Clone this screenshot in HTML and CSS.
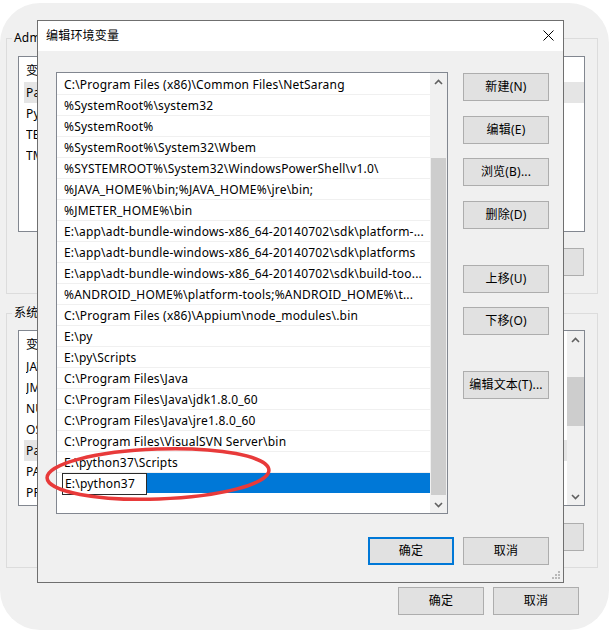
FILE: index.html
```html
<!DOCTYPE html>
<html lang="zh-CN">
<head>
<meta charset="utf-8">
<title>编辑环境变量</title>
<link rel="stylesheet" href="styles.css">
</head>
<body>
<div class="bgwin">
  <div class="group">
    <div class="glabel">Administrator 的用户变量(U)</div>
    <div class="blist">
      <div class="bhead"><span class="cell">变量</span></div>
      <div class="brow hl"><span class="cell">Path</span></div>
      <div class="brow"><span class="cell">PyCharm</span></div>
      <div class="brow"><span class="cell">TEMP</span></div>
      <div class="brow"><span class="cell">TMP</span></div>
    </div>
    <div class="bbtnrow">
      <div class="btn"></div>
      <div class="btn"></div>
      <div class="btn"></div>
    </div>
  </div>
  <div class="group group2">
    <div class="glabel">系统变量(S)</div>
    <div class="blist blist2">
      <div class="brows">
        <div class="bhead"><span class="cell">变量</span></div>
        <div class="brow"><span class="cell">JAVA_HOME</span></div>
        <div class="brow"><span class="cell">JMETER_HOME</span></div>
        <div class="brow"><span class="cell">NUMBER_OF_PROCESSORS</span></div>
        <div class="brow"><span class="cell">OS</span></div>
        <div class="brow hl"><span class="cell">Path</span></div>
        <div class="brow"><span class="cell">PATHEXT</span></div>
        <div class="brow"><span class="cell">PROCESSOR_ARCHITECTURE</span></div>
      </div>
      <div class="sbar sbar-small">
        <div class="sarrow"><svg width="9" height="6" viewBox="0 0 9 6"><polyline points="1,5 4.5,1.5 8,5" fill="none" stroke="#606060" stroke-width="1.6"/></svg></div>
        <div class="sgap-small"></div>
        <div class="sthumb sthumb-small"></div>
        <div class="sflex"></div>
        <div class="sarrow"><svg width="9" height="6" viewBox="0 0 9 6"><polyline points="1,1 4.5,4.5 8,1" fill="none" stroke="#606060" stroke-width="1.6"/></svg></div>
      </div>
    </div>
    <div class="bbtnrow bbtnrow2">
      <div class="btn"></div>
      <div class="btn"></div>
      <div class="btn"></div>
    </div>
  </div>
  <div class="bfoot">
    <div class="btn">确定</div>
    <div class="btn">取消</div>
  </div>
</div>

<div class="dlg">
  <div class="titlebar">
    <div class="title">编辑环境变量</div>
    <div class="close"><svg width="11" height="11" viewBox="0 0 11 11"><path d="M0.5 0.5 L10.5 10.5 M10.5 0.5 L0.5 10.5" stroke="#000" stroke-width="1"/></svg></div>
  </div>
  <div class="dbody">
    <div class="dmain">
      <div class="plist">
        <div class="prows">
          <div class="prow">C:\Program Files (x86)\Common Files\NetSarang</div>
          <div class="prow">%SystemRoot%\system32</div>
          <div class="prow">%SystemRoot%</div>
          <div class="prow">%SystemRoot%\System32\Wbem</div>
          <div class="prow">%SYSTEMROOT%\System32\WindowsPowerShell\v1.0\</div>
          <div class="prow">%JAVA_HOME%\bin;%JAVA_HOME%\jre\bin;</div>
          <div class="prow">%JMETER_HOME%\bin</div>
          <div class="prow">E:\app\adt-bundle-windows-x86_64-20140702\sdk\platform-...</div>
          <div class="prow">E:\app\adt-bundle-windows-x86_64-20140702\sdk\platforms</div>
          <div class="prow">E:\app\adt-bundle-windows-x86_64-20140702\sdk\build-too...</div>
          <div class="prow">%ANDROID_HOME%\platform-tools;%ANDROID_HOME%\t...</div>
          <div class="prow">C:\Program Files (x86)\Appium\node_modules\.bin</div>
          <div class="prow">E:\py</div>
          <div class="prow">E:\py\Scripts</div>
          <div class="prow">C:\Program Files\Java</div>
          <div class="prow">C:\Program Files\Java\jdk1.8.0_60</div>
          <div class="prow">C:\Program Files\Java\jre1.8.0_60</div>
          <div class="prow">C:\Program Files\VisualSVN Server\bin</div>
          <div class="prow">E:\python37\Scripts</div>
          <div class="prow sel"><div class="selfill"><div class="editbox">E:\python37</div></div></div>
        </div>
        <div class="sbar">
          <div class="sarrow"><svg width="9" height="6" viewBox="0 0 9 6"><polyline points="1,5 4.5,1.5 8,5" fill="none" stroke="#606060" stroke-width="1.6"/></svg></div>
          <div class="sgap"></div>
          <div class="sthumb"></div>
          <div class="sgap1"></div>
          <div class="sarrow"><svg width="9" height="6" viewBox="0 0 9 6"><polyline points="1,1 4.5,4.5 8,1" fill="none" stroke="#606060" stroke-width="1.6"/></svg></div>
        </div>
      </div>
      <div class="dbtns">
        <div class="btn">新建(N)</div>
        <div class="btn">编辑(E)</div>
        <div class="btn">浏览(B)...</div>
        <div class="btn">删除(D)</div>
        <div class="btn sp">上移(U)</div>
        <div class="btn">下移(O)</div>
        <div class="btn sp">编辑文本(T)...</div>
      </div>
    </div>
    <div class="dfoot">
      <div class="btn default">确定</div>
      <div class="btn">取消</div>
    </div>
  </div>
  <svg class="grip" width="8" height="8" viewBox="0 0 8 8">
    <rect x="6" y="0" width="2" height="2" fill="#b8b8b8"/>
    <rect x="3" y="3" width="2" height="2" fill="#b8b8b8"/>
    <rect x="6" y="3" width="2" height="2" fill="#b8b8b8"/>
    <rect x="0" y="6" width="2" height="2" fill="#b8b8b8"/>
    <rect x="3" y="6" width="2" height="2" fill="#b8b8b8"/>
    <rect x="6" y="6" width="2" height="2" fill="#b8b8b8"/>
  </svg>
</div>

<svg class="mark" width="609" height="632" viewBox="0 0 609 632">
  <ellipse cx="158" cy="474" rx="111" ry="25" transform="rotate(-2 158 474)" fill="none" stroke="#e83a3a" stroke-width="3.5"/>
</svg>
</body>
</html>
```

FILE: styles.css
```css
* { box-sizing: border-box; }
html, body { margin: 0; padding: 0; }
body {
  width: 609px;
  height: 632px;
  position: relative;
  overflow: hidden;
  background: #ffffff;
  font-family: "Noto Sans", "Noto Sans CJK SC", sans-serif;
  font-size: 12px;
  letter-spacing: 0.2px;
  color: #000;
}

/* background window */
.bgwin {
  position: absolute;
  left: 0;
  top: 3px;
  width: 609px;
  height: 627px;
  border-radius: 40px;
  background: #f0f0f0;
  padding: 35px 0 0 6px;
}
.group {
  position: relative;
  width: 592px;
  height: 256px;
  border: 1px solid #dcdcdc;
  padding: 17px 0 0 11px;
}
.group2 { margin-top: 19px; height: 255px; padding-top: 16px; }
.glabel {
  position: absolute;
  left: 5px;
  top: -9px;
  padding: 0 2px;
  line-height: 16px;
  background: #f0f0f0;
  white-space: nowrap;
}
.blist {
  width: 567px;
  height: 176px;
  border: 1px solid #828790;
  background: #fff;
  overflow: hidden;
}
.blist2 { display: flex; }
.brows { flex: 1; }
.bhead { height: 25px; line-height: 21px; padding: 3px 0 0 7px; white-space: nowrap; }
.brow { height: 21px; line-height: 21px; margin-left: 5px; padding-left: 2px; white-space: nowrap; }
.brow.hl { background: #e5e5e5; }
.cell { display: inline-block; width: 30px; overflow: hidden; vertical-align: top; }
.bbtnrow {
  display: flex;
  justify-content: flex-end;
  gap: 9px;
  width: 567px;
  padding-right: 1px;
  margin-top: 16px;
}
.bbtnrow2 { margin-top: 17px; }
.bfoot {
  display: flex;
  justify-content: flex-end;
  gap: 9px;
  margin-top: 19px;
  padding-right: 30px;
}

.btn {
  width: 86px;
  height: 28px;
  border: 1px solid #adadad;
  background: #e1e1e1;
  display: flex;
  align-items: center;
  justify-content: center;
  white-space: nowrap;
  line-height: 16px;
}
.btn.default { border: 2px solid #0078d7; }

/* scrollbars */
.sbar {
  width: 17px;
  background: #f0f0f0;
  display: flex;
  flex-direction: column;
  flex: none;
}
.sarrow {
  height: 17px;
  display: flex;
  align-items: center;
  justify-content: center;
  padding-top: 1px;
}
.sarrow svg { display: block; }
.sthumb { height: 337px; margin: 0 1px; background: #cdcdcd; }
.sgap { height: 68px; }
.sgap1 { height: 1px; }
.sgap-small { height: 29px; }
.sthumb-small { height: 49px; margin: 0; }
.sflex { flex: 1; }

/* dialog */
.dlg {
  position: absolute;
  left: 37px;
  top: 20px;
  width: 527px;
  height: 563px;
  border: 1px solid #6f6f6f;
  background: #f0f0f0;
  display: flex;
  flex-direction: column;
}
.titlebar {
  height: 30px;
  background: #fff;
  display: flex;
  align-items: center;
  justify-content: space-between;
  padding: 0 9px 0 8px;
}
.title { line-height: 16px; }
.close { width: 11px; height: 11px; margin-top: -1px; }
.close svg { display: block; }
.dbody {
  padding: 21px 14px 0 18px;
  display: flex;
  flex-direction: column;
}
.dmain { display: flex; gap: 15px; }
.plist {
  width: 392px;
  height: 442px;
  border: 1px solid #828790;
  background: #fff;
  display: flex;
}
.prows { flex: 1; padding-top: 1px; overflow: hidden; }
.prow {
  height: 21px;
  line-height: 21px;
  border-bottom: 1px solid #f0f0f0;
  padding-left: 7px;
  white-space: nowrap;
  overflow: hidden;
}
.prow.sel { padding-left: 5px; border-bottom: 0; overflow: visible; }
.selfill { height: 20px; background: #0078d7; }
.editbox {
  width: 85px;
  height: 22px;
  background: #fff;
  border: 1px solid #2b2b2b;
  padding-left: 2px;
  line-height: 20px;
}
.dbtns {
  width: 86px;
  padding-top: 1px;
  display: flex;
  flex-direction: column;
  gap: 15px;
}
.dbtns .btn:nth-child(3) { margin-top: -1px; }
.dbtns .btn.sp { margin-top: 21px; }
.dbtns .btn:nth-child(6) { margin-top: -1px; }
.dfoot {
  display: flex;
  justify-content: flex-end;
  gap: 9px;
  margin-top: 23px;
}
.grip { position: absolute; right: 3px; bottom: 3px; }

.mark { position: absolute; left: 0; top: 0; pointer-events: none; }
```
